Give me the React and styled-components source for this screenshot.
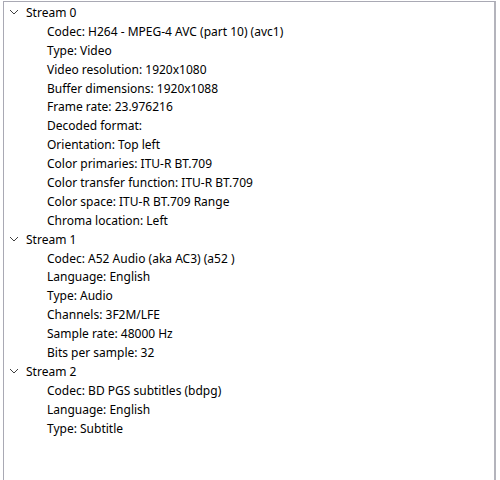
import React from "react";
import styled, { createGlobalStyle } from "styled-components";

const GlobalStyle = createGlobalStyle`
  html, body {
    margin: 0;
    padding: 0;
    background: #ffffff;
  }
  body {
    font-family: "Noto Sans", "Open Sans", sans-serif;
  }
`;

const Page = styled.div`
  width: 500px;
  height: 480px;
  overflow: hidden;
  background: #ffffff;
`;

const Tree = styled.div`
  margin: 1px 0 0 3px;
  width: 493px;
  height: 490px;
  box-sizing: border-box;
  border: 1px solid #a9a9b4;
  border-right: 2px solid #b4b4bc;
  padding-top: 1px;
`;

const Row = styled.div`
  display: flex;
  align-items: center;
  height: 18.9px;
  padding-left: ${(p) => (p.child ? "43px" : "5px")};
  font-size: 12px;
  color: #000000;
  white-space: nowrap;
`;

const Toggle = styled.span`
  display: flex;
  align-items: center;
  justify-content: center;
  width: 10px;
  margin-right: 7px;
`;

const Chevron = () => (
  <svg width="10" height="6" viewBox="0 0 10 6">
    <path d="M1 1 L5 5 L9 1" fill="none" stroke="#404040" strokeWidth="1" />
  </svg>
);

const streams = [
  {
    name: "Stream 0",
    items: [
      "Codec: H264 - MPEG-4 AVC (part 10) (avc1)",
      "Type: Video",
      "Video resolution: 1920x1080",
      "Buffer dimensions: 1920x1088",
      "Frame rate: 23.976216",
      "Decoded format:",
      "Orientation: Top left",
      "Color primaries: ITU-R BT.709",
      "Color transfer function: ITU-R BT.709",
      "Color space: ITU-R BT.709 Range",
      "Chroma location: Left",
    ],
  },
  {
    name: "Stream 1",
    items: [
      "Codec: A52 Audio (aka AC3) (a52 )",
      "Language: English",
      "Type: Audio",
      "Channels: 3F2M/LFE",
      "Sample rate: 48000 Hz",
      "Bits per sample: 32",
    ],
  },
  {
    name: "Stream 2",
    items: [
      "Codec: BD PGS subtitles (bdpg)",
      "Language: English",
      "Type: Subtitle",
    ],
  },
];

const App = () => (
  <Page>
    <GlobalStyle />
    <Tree>
      {streams.map((s) => (
        <React.Fragment key={s.name}>
          <Row>
            <Toggle>
              <Chevron />
            </Toggle>
            {s.name}
          </Row>
          {s.items.map((item, i) => (
            <Row child key={i}>
              {item}
            </Row>
          ))}
        </React.Fragment>
      ))}
    </Tree>
  </Page>
);

export default App;
